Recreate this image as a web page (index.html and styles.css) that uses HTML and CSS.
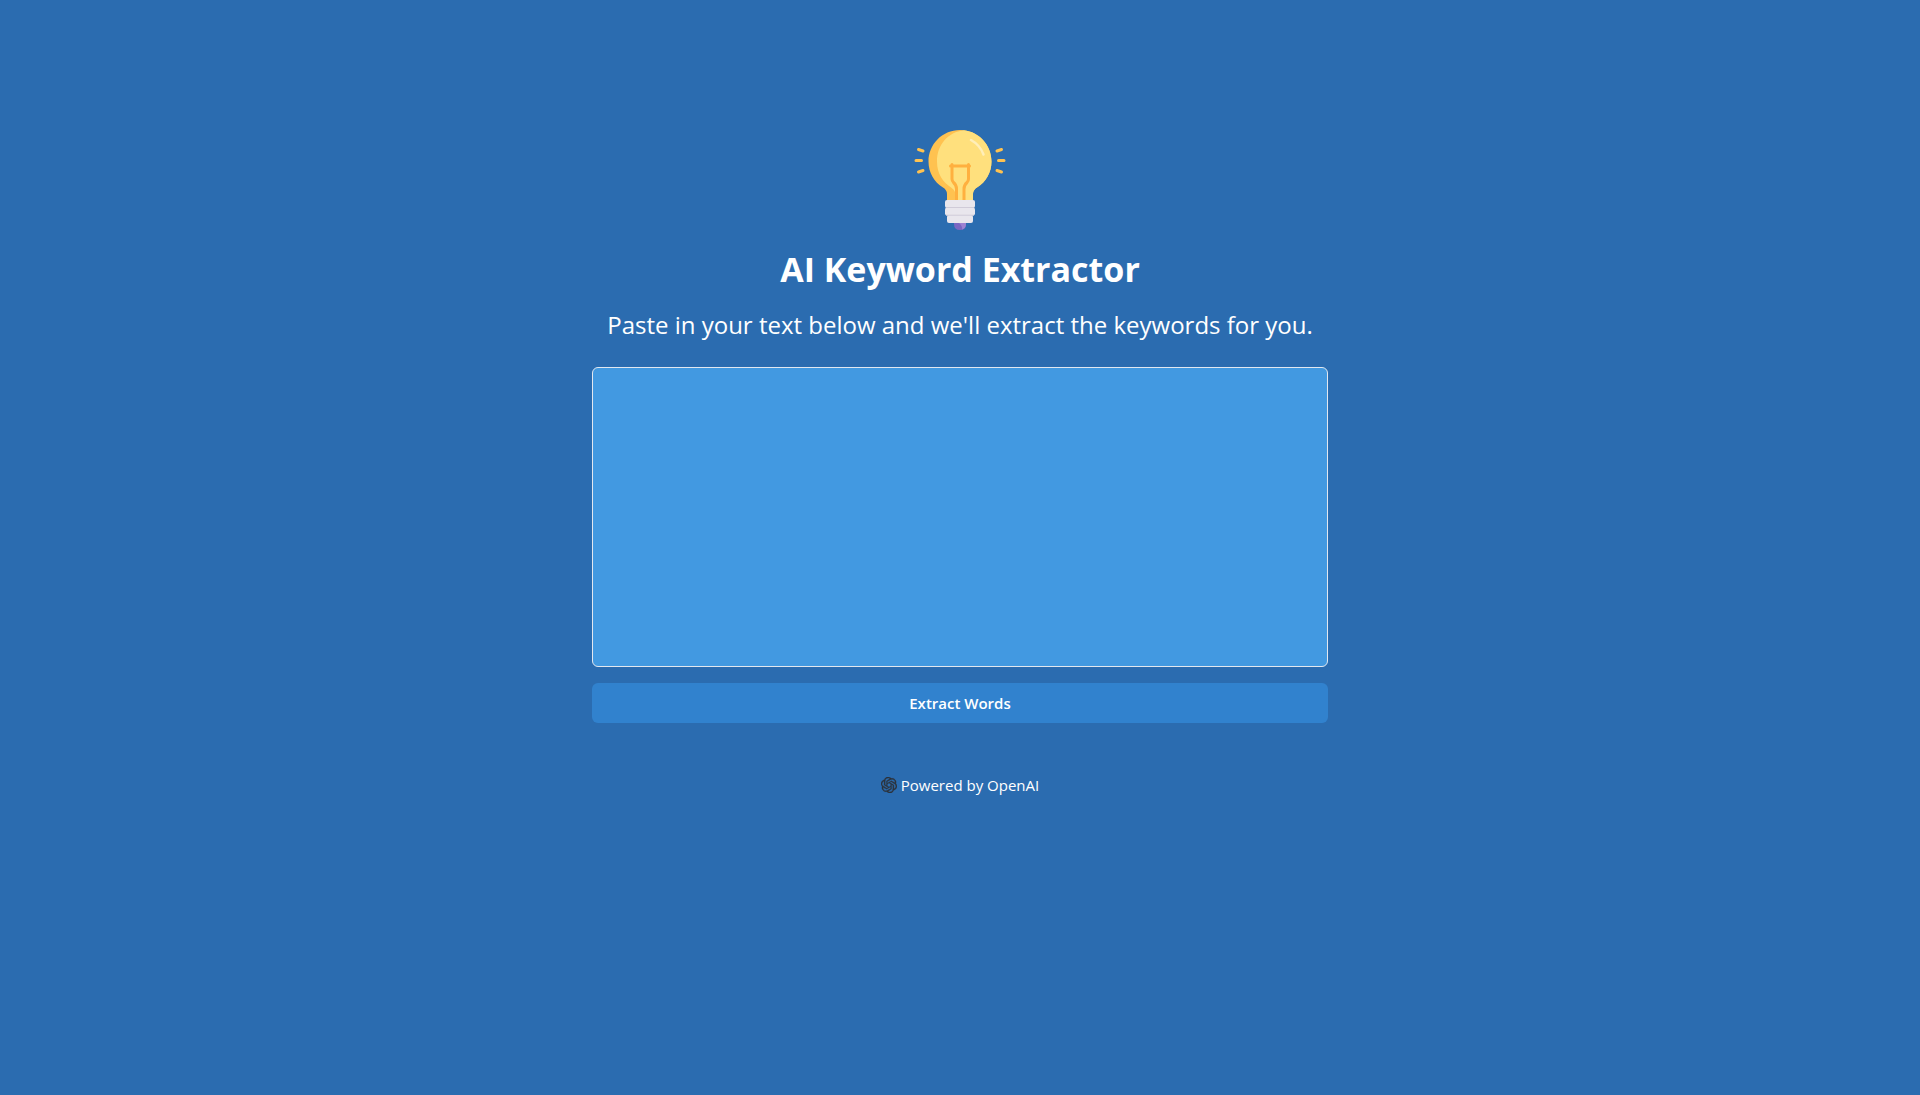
FILE: index.html
```html
<!DOCTYPE html>
<html lang="en">
<head>
<meta charset="utf-8">
<meta name="viewport" content="width=device-width, initial-scale=1">
<title>AI Keyword Extractor</title>
<link rel="stylesheet" href="styles.css">
</head>
<body>
<div class="container">
  <header class="header">
    <svg class="bulb" viewBox="10 10 100 100" aria-hidden="true">
      <path fill="#ffc250" d="M60 10C42 10 28.500 24.500 28.500 41.500C28.500 52.500 34 62 43 67.500Q47 70 47 74V81H73V74Q73 70 77 67.500C86 62 91.500 52.500 91.500 41.500C91.500 24.500 78 10 60 10Z"/>
      <path fill="#ffe07d" d="M64 10.300C48 12 37 25 37 41.500C37 54 43 62 51 67.500Q56 71 56 76V81H73V74Q73 70 77 67.500C86 62 91.500 52.500 91.500 41.500C91.500 25 79 12 64 10.300Z"/>
      <path fill="none" stroke="#ffb03f" stroke-width="3" stroke-linecap="round" stroke-linejoin="round" d="M50.500 46H69.500M52 44.500V59Q52 61 53.500 62.500Q56.500 65 56.500 69V81M68.500 44.500V59Q68.500 61 67 62.500Q64 65 64 69V81"/>
      <path fill="none" stroke="#ffeeb8" stroke-width="2.500" stroke-linecap="round" d="M71 20Q80 25 83.500 34.500"/>
      <path fill="none" stroke="#ffc250" stroke-width="3" stroke-linecap="round" d="M18.500 29.500L23 31M16 40.500H21.500M18.500 52L23 50.500M101.500 29.500L97 31M98.500 40.500H104M101.500 52L97 50.500"/>
      <path fill="#7b66c2" d="M54 102H66V104Q66 110 60 110Q54 110 54 104Z"/>
      <path fill="#9d82d2" d="M58 102H66V104Q66 108.500 62 109.500Q63 106 58 102Z"/>
      <rect fill="#e9e6ed" x="45" y="80" width="30" height="8" rx="2"/>
      <rect fill="#e9e6ed" x="45" y="87.500" width="30" height="8" rx="2"/>
      <rect fill="#e9e6ed" x="47" y="95" width="26" height="8" rx="2"/>
      <path fill="none" stroke="#d0cbd8" stroke-width="1" d="M46 87.500H74M46 95.200H74"/>
    </svg>
    <h1 class="title">AI Keyword Extractor</h1>
    <label class="subtitle" for="text">Paste in your text below and we'll extract the keywords for you.</label>
  </header>
  <form class="form">
    <textarea class="field" id="text" name="text"></textarea>
    <button class="submit" type="button">Extract Words</button>
  </form>
  <footer class="footer">
    <svg class="logo" viewBox="0 0 24 24" aria-hidden="true"><path fill="#2d333b" stroke="#2d333b" stroke-width=".6" d="M22.2819 9.8211a5.9847 5.9847 0 0 0-.5157-4.9108 6.0462 6.0462 0 0 0-6.5098-2.9A6.0651 6.0651 0 0 0 4.9807 4.1818a5.9847 5.9847 0 0 0-3.9977 2.9 6.0462 6.0462 0 0 0 .7427 7.0966 5.98 5.98 0 0 0 .511 4.9107 6.051 6.051 0 0 0 6.5146 2.9001A5.9847 5.9847 0 0 0 13.2599 24a6.0557 6.0557 0 0 0 5.7718-4.2058 5.9894 5.9894 0 0 0 3.9977-2.9001 6.0557 6.0557 0 0 0-.7475-7.0729zm-9.022 12.6081a4.4755 4.4755 0 0 1-2.8764-1.0408l.1419-.0804 4.7783-2.7582a.7948.7948 0 0 0 .3927-.6813v-6.7369l2.02 1.1686a.071.071 0 0 1 .038.052v5.5826a4.504 4.504 0 0 1-4.4945 4.4944zm-9.6607-4.1254a4.4708 4.4708 0 0 1-.5346-3.0137l.142.0852 4.783 2.7582a.7712.7712 0 0 0 .7806 0l5.8428-3.3685v2.3324a.0804.0804 0 0 1-.0332.0615L9.74 19.9502a4.4992 4.4992 0 0 1-6.1408-1.6464zM2.3408 7.8956a4.485 4.485 0 0 1 2.3655-1.9728V11.6a.7664.7664 0 0 0 .3879.6765l5.8144 3.3543-2.0201 1.1685a.0757.0757 0 0 1-.071 0l-4.8303-2.7865A4.504 4.504 0 0 1 2.3408 7.872zm16.5963 3.8558L13.1038 8.364 15.1192 7.2a.0757.0757 0 0 1 .071 0l4.8303 2.7913a4.4944 4.4944 0 0 1-.6765 8.1042v-5.6772a.79.79 0 0 0-.407-.667zm2.0107-3.0231l-.142-.0852-4.7735-2.7818a.7759.7759 0 0 0-.7854 0L9.409 9.2297V6.8974a.0662.0662 0 0 1 .0284-.0615l4.8303-2.7866a4.4992 4.4992 0 0 1 6.6802 4.66zM8.3065 12.863l-2.02-1.1638a.0804.0804 0 0 1-.038-.0567V6.0742a4.4992 4.4992 0 0 1 7.3757-3.4537l-.142.0805L8.704 5.459a.7948.7948 0 0 0-.3927.6813zm1.0976-2.3654l2.602-1.4998 2.6069 1.4998v2.9994l-2.5974 1.4997-2.6067-1.4997Z"/></svg>
    <span>Powered by OpenAI</span>
  </footer>
</div>
</body>
</html>
```
FILE: styles.css
```css
* {
  box-sizing: border-box;
}

body {
  margin: 0;
  min-height: 100vh;
  background: #2b6cb0;
  color: #fff;
  font-family: "Segoe UI", "Open Sans", "Noto Sans", sans-serif;
  font-size: 15px;
  line-height: 24px;
}

.container {
  max-width: 768px;
  margin: 0 auto;
  padding: 130px 16px 32px;
}

.header {
  display: flex;
  flex-direction: column;
  align-items: center;
  text-align: center;
}

.bulb {
  width: 100px;
  height: 100px;
}

.title {
  margin: 18px 0 16px;
  font-size: 34px;
  font-weight: 700;
  line-height: 43px;
}

.subtitle {
  font-size: 24px;
  line-height: 36px;
}

.form {
  display: flex;
  flex-direction: column;
  gap: 16px;
  margin-top: 24px;
}

.field {
  width: 100%;
  height: 300px;
  padding: 8px 16px;
  border: 1px solid #e2e8f0;
  border-radius: 6px;
  background: #4299e1;
  color: inherit;
  font: inherit;
  resize: none;
}

.submit {
  height: 40px;
  border: 0;
  border-radius: 6px;
  background: #3182ce;
  color: inherit;
  font: inherit;
  font-weight: 600;
  cursor: pointer;
}

.footer {
  display: flex;
  justify-content: center;
  align-items: center;
  gap: 4px;
  margin-top: 50px;
}

.logo {
  width: 16px;
  height: 16px;
}
```
